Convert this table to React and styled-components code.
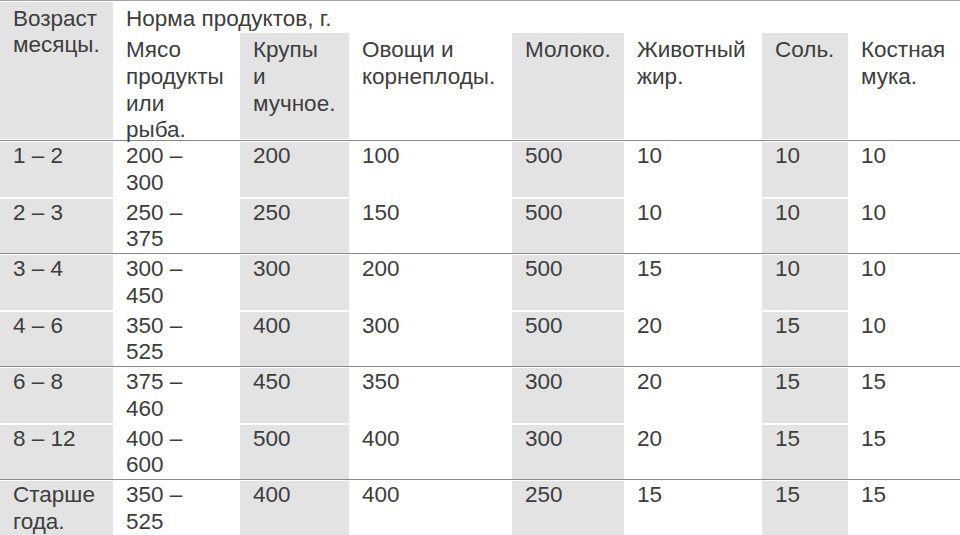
import React from "react";
import styled, { createGlobalStyle } from "styled-components";

const COLS = "113px 127px 109px 163px 112px 138px 86px 112px";
const SHADE = "#e3e3e3";

const Global = createGlobalStyle`
  html, body { margin: 0; padding: 0; background: #ffffff; }
  body {
    font-family: "Liberation Sans", Arial, Helvetica, sans-serif;
    color: #3d3d3d;
    -webkit-font-smoothing: antialiased;
  }
`;

const Table = styled.div`
  width: 960px;
  height: 535px;
  overflow: hidden;
  border-top: 1px solid #a3a3a3;
  padding-top: 1px;
  box-sizing: border-box;
  font-size: 22.5px;
  line-height: 26.8px;
`;

const Header = styled.div`
  display: grid;
  grid-template-columns: ${COLS};
  grid-template-rows: 31px 106px;
`;

const HeadCell = styled.div`
  background: ${(p) => (p.$shade ? SHADE : "transparent")};
  grid-row: ${(p) => p.$row || "auto"};
  grid-column: ${(p) => p.$col || "auto"};
  padding: ${(p) => (p.$top ? "3.5px" : "4px")} 0 0 13px;
  white-space: nowrap;
`;

const Row = styled.div`
  display: grid;
  grid-template-columns: ${COLS};
  height: 53.5px;
  ${(p) =>
    p.$divider === "line"
      ? `margin-top: 1px; border-top: 1px solid #8a8a8a; padding-top: 1px;`
      : `padding-top: 3px;`}
`;

const Cell = styled.div`
  background: ${(p) => (p.$shade ? SHADE : "transparent")};
  padding: 1px 0 0 13px;
  white-space: nowrap;
`;

const shaded = [true, false, true, false, true, false, true, false];

const rows = [
  [["1 – 2"], ["200 –", "300"], ["200"], ["100"], ["500"], ["10"], ["10"], ["10"]],
  [["2 – 3"], ["250 –", "375"], ["250"], ["150"], ["500"], ["10"], ["10"], ["10"]],
  [["3 – 4"], ["300 –", "450"], ["300"], ["200"], ["500"], ["15"], ["10"], ["10"]],
  [["4 – 6"], ["350 –", "525"], ["400"], ["300"], ["500"], ["20"], ["15"], ["10"]],
  [["6 – 8"], ["375 –", "460"], ["450"], ["350"], ["300"], ["20"], ["15"], ["15"]],
  [["8 – 12"], ["400 –", "600"], ["500"], ["400"], ["300"], ["20"], ["15"], ["15"]],
  [["Старше", "года."], ["350 –", "525"], ["400"], ["400"], ["250"], ["15"], ["15"], ["15"]],
];

const subHeads = [
  ["Мясо", "продукты", "или", "рыба."],
  ["Крупы", "и", "мучное."],
  ["Овощи и", "корнеплоды."],
  ["Молоко."],
  ["Животный", "жир."],
  ["Соль."],
  ["Костная", "мука."],
];

const Lines = ({ lines }) =>
  lines.map((l, i) => (
    <React.Fragment key={i}>
      {i > 0 && <br />}
      {l}
    </React.Fragment>
  ));

export default function App() {
  return (
    <>
      <Global />
      <Table>
        <Header>
          <HeadCell $shade $row="1 / span 2" $col="1" $top>
            <Lines lines={["Возраст", "месяцы."]} />
          </HeadCell>
          <HeadCell $row="1" $col="2 / span 7" $top>
            Норма продуктов, г.
          </HeadCell>
          {subHeads.map((h, i) => (
            <HeadCell key={i} $row="2" $col={`${i + 2}`} $shade={shaded[i + 1]}>
              <Lines lines={h} />
            </HeadCell>
          ))}
        </Header>
        {rows.map((r, ri) => (
          <Row key={ri} $divider={ri % 2 === 0 ? "line" : "gap"}>
            {r.map((c, ci) => (
              <Cell key={ci} $shade={shaded[ci]}>
                <Lines lines={c} />
              </Cell>
            ))}
          </Row>
        ))}
      </Table>
    </>
  );
}
